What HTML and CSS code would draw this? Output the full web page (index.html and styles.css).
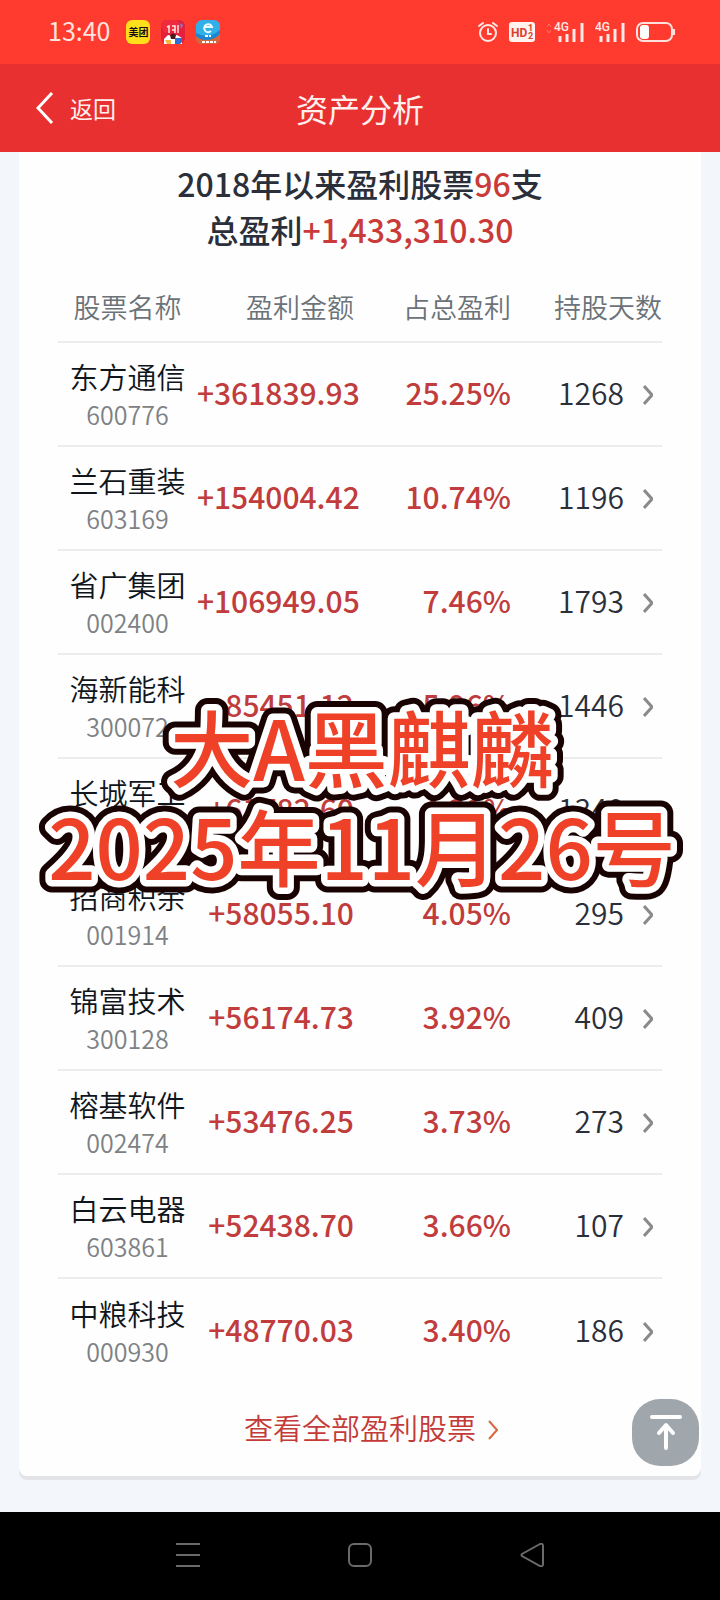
FILE: index.html
```html
<!DOCTYPE html>
<html lang="zh-CN">
<head>
    <meta charset="UTF-8">
    <meta name="viewport" content="width=device-width, initial-scale=1.0">
    <title>资产分析</title>
    <link rel="stylesheet" href="styles.css">
</head>
<body>

<div class="status_bar">
    <span class="time">13:40</span>
    <div class="apps">
        <span class="app_meituan">美团</span>
        <svg width="24" height="24" viewBox="0 0 24 24">
            <rect width="24" height="24" rx="6" fill="#e5203c"/>
            <path d="M0 6q0-6 6-6h10l4 7-16 6z" fill="#ef2b3d"/>
            <path d="M6 7l2-1v7M11 6h3v7M11 10h3M17 5v8" stroke="#ffe6e6" stroke-width="1.5" fill="none"/>
            <path d="M19 3l3 2-2 4z" fill="#7f7fd0"/>
            <path d="M3 24v-5l4-4 5 1 4-1 5 3v6z" fill="#fff"/>
            <path d="M9 15q3-3 6 0l-1 4h-4z" fill="#4a1c1c"/>
            <path d="M4 20h6v4H6z" fill="#f6b73c"/>
            <path d="M14 18h7v4l-2 2h-5z" fill="#2f6fd0"/>
        </svg>
        <svg width="24" height="24" viewBox="0 0 24 24">
            <rect width="24" height="24" rx="6" fill="#2fb0ea"/>
            <path d="M0 15q12 8 24-2v5q0 6-6 6H6q-6 0-6-6z" fill="#d9653b"/>
            <path d="M0 13q12 7 24-3v4q-6 6-14 6-6 0-10-4z" fill="#1c86cf"/>
            <path d="M9 7h7a4 4 0 1 0-1 4" stroke="#e9fbff" stroke-width="2" fill="none"/>
            <path d="M9 16h6M6 22h14" stroke="#fff" stroke-width="2" stroke-dasharray="3 1"/>
        </svg>
    </div>
    <div class="signals">
        <svg width="20" height="22" viewBox="0 0 20 22" fill="none" stroke="#ffe9e6" stroke-width="2" stroke-linecap="round">
            <circle cx="10" cy="12" r="8"/>
            <path d="M10 8v5h3M1 5l4-3M19 5l-4-3"/>
        </svg>
        <svg width="26" height="20" viewBox="0 0 26 20">
            <rect width="26" height="20" rx="3" fill="#fff2ef"/>
            <text x="2" y="15" class="hd">HD</text>
            <text x="19" y="9" class="hd_small">1</text>
            <text x="19" y="17" class="hd_small">2</text>
        </svg>
        <svg width="38" height="22" viewBox="0 0 38 22">
            <path d="M1 6l2-3 2 3M1 9l2 3 2-3" stroke="#ff7065" fill="none"/>
            <text x="8" y="10" class="net">4G</text>
            <path d="M14 15v6M21 13v8M28 8v13M36 2v19" stroke="#ffe9e6" stroke-width="3"/>
        </svg>
        <svg width="30" height="22" viewBox="0 0 30 22">
            <text x="0" y="10" class="net">4G</text>
            <path d="M6 15v6M13 13v8M20 8v13M28 2v19" stroke="#ffe9e6" stroke-width="3"/>
        </svg>
        <svg width="39" height="20" viewBox="0 0 39 20">
            <rect x="1" y="1" width="35" height="18" rx="6" fill="none" stroke="#ffe0dc" stroke-width="2"/>
            <rect x="4" y="3" width="9" height="14" rx="3" fill="#fff"/>
            <path d="M38 7v6" stroke="#ffe0dc" stroke-width="2"/>
        </svg>
    </div>
</div>

<header class="top_bar">
    <a href="#" class="back">
        <svg width="18" height="32" viewBox="0 0 18 32" fill="none" stroke="#fff" stroke-width="3">
            <path d="M16 1L2 16l14 15"/>
        </svg>
        返回
    </a>
    <h1>资产分析</h1>
</header>

<main class="main_container">
    <section class="card">
        <h2>2018年以来盈利股票<b>96</b>支<br>总盈利<b>+1,433,310.30</b></h2>

        <table class="stocks">
            <thead>
                <tr><th class="c_name">股票名称</th><th class="c_sum">盈利金额</th><th class="c_part">占总盈利</th><th class="c_days">持股天数</th></tr>
            </thead>
            <tbody>
                <tr><td>东方通信<small>600776</small></td><td>+361839.93</td><td>25.25%</td><td><a href="#">1268<svg class="arrow" viewBox="0 0 10 20"><path d="M1 1l8 9-8 9"/></svg></a></td></tr>
                <tr><td>兰石重装<small>603169</small></td><td>+154004.42</td><td>10.74%</td><td><a href="#">1196<svg class="arrow" viewBox="0 0 10 20"><path d="M1 1l8 9-8 9"/></svg></a></td></tr>
                <tr><td>省广集团<small>002400</small></td><td>+106949.05</td><td>7.46%</td><td><a href="#">1793<svg class="arrow" viewBox="0 0 10 20"><path d="M1 1l8 9-8 9"/></svg></a></td></tr>
                <tr><td>海新能科<small>300072</small></td><td>+85451.12</td><td>5.96%</td><td><a href="#">1446<svg class="arrow" viewBox="0 0 10 20"><path d="M1 1l8 9-8 9"/></svg></a></td></tr>
                <tr><td>长城军工<small>601606</small></td><td>+61782.60</td><td>4.31%</td><td><a href="#">1340<svg class="arrow" viewBox="0 0 10 20"><path d="M1 1l8 9-8 9"/></svg></a></td></tr>
                <tr><td>招商积余<small>001914</small></td><td>+58055.10</td><td>4.05%</td><td><a href="#">295<svg class="arrow" viewBox="0 0 10 20"><path d="M1 1l8 9-8 9"/></svg></a></td></tr>
                <tr><td>锦富技术<small>300128</small></td><td>+56174.73</td><td>3.92%</td><td><a href="#">409<svg class="arrow" viewBox="0 0 10 20"><path d="M1 1l8 9-8 9"/></svg></a></td></tr>
                <tr><td>榕基软件<small>002474</small></td><td>+53476.25</td><td>3.73%</td><td><a href="#">273<svg class="arrow" viewBox="0 0 10 20"><path d="M1 1l8 9-8 9"/></svg></a></td></tr>
                <tr><td>白云电器<small>603861</small></td><td>+52438.70</td><td>3.66%</td><td><a href="#">107<svg class="arrow" viewBox="0 0 10 20"><path d="M1 1l8 9-8 9"/></svg></a></td></tr>
                <tr><td>中粮科技<small>000930</small></td><td>+48770.03</td><td>3.40%</td><td><a href="#">186<svg class="arrow" viewBox="0 0 10 20"><path d="M1 1l8 9-8 9"/></svg></a></td></tr>
            </tbody>
        </table>

        <a href="#" class="more">查看全部盈利股票<svg class="arrow" viewBox="0 0 10 20"><path d="M1 1l8 9-8 9"/></svg></a>
    </section>
</main>

<!-- caption over the list: dark outline, white outline, red text -->
<svg class="caption" viewBox="0 0 720 260">
    <use href="#caption_text" class="outline_dark"/>
    <use href="#caption_text" class="outline_white"/>
    <g id="caption_text">
        <text x="362" y="121">大A黑麒麟</text>
        <text x="362" y="220">2025年11月26号</text>
    </g>
</svg>

<button class="to_top" type="button" aria-label="回到顶部">
    <svg width="32" height="36" viewBox="0 0 32 36" fill="none" stroke="#fff" stroke-width="4" stroke-linecap="round" stroke-linejoin="round">
        <path d="M2 2h28M16 33V11M9 18l7-8 7 8"/>
    </svg>
</button>

<nav class="nav_bar">
    <button type="button" aria-label="菜单">
        <svg width="24" height="24" viewBox="0 0 24 24"><path d="M0 1h24M0 12h24M0 23h24"/></svg>
    </button>
    <button type="button" aria-label="主屏幕">
        <svg width="24" height="24" viewBox="0 0 24 24"><rect x="1" y="1" width="22" height="22" rx="5"/></svg>
    </button>
    <button type="button" aria-label="返回">
        <svg width="24" height="24" viewBox="0 0 24 24"><path d="M20 1L2 11q-1 1 0 2l18 10q3 1 3-2V3q0-3-3-2z"/></svg>
    </button>
</nav>

</body>
</html>
```

FILE: styles.css
```css
* {
  box-sizing: border-box;
}

body {
  margin: 0;
  min-height: 100vh;
  display: flex;
  flex-direction: column;
  position: relative;
  background-color: #f3f7fb;
  font-family: "Noto Sans CJK SC", sans-serif;
  color: #2a2f3a;
}

a {
  color: inherit;
  text-decoration: none;
}

button {
  border: none;
  padding: 0;
  cursor: pointer;
}

.status_bar {
  height: 64px;
  padding: 0 45px 0 48px;
  display: flex;
  align-items: center;
  background-color: #ff3b2f;
  color: #ffe3df;
}

.time {
  font-size: 25px;
  line-height: 60px;
  padding-bottom: 4px;
}

.apps {
  display: flex;
  gap: 11px;
  margin-left: 16px;
}

.app_meituan {
  width: 24px;
  height: 24px;
  border-radius: 6px;
  background-color: #ffdf1b;
  color: #111;
  font-size: 10px;
  font-weight: 700;
  line-height: 24px;
  text-align: center;
}

.signals {
  display: flex;
  align-items: center;
  gap: 11px;
  margin-left: auto;
}

.hd,
.hd_small,
.net {
  font-family: Roboto, sans-serif;
  font-weight: 700;
}

.hd {
  font-size: 12px;
  fill: #d8402f;
}

.hd_small {
  font-size: 9px;
  fill: #d8402f;
}

.net {
  font-size: 12px;
  font-weight: 500;
  fill: #ffe9e6;
}

.top_bar {
  height: 88px;
  padding: 0 36px;
  display: grid;
  grid-template-columns: 1fr auto 1fr;
  align-items: center;
  background-color: #e83030;
  color: #fff0ee;
}

.back {
  display: flex;
  align-items: center;
  gap: 16px;
  font-size: 23px;
}

h1 {
  margin: 0;
  font-size: 32px;
  font-weight: 400;
}

.main_container {
  flex: 1;
  padding: 0 19px 36px;
}

.card {
  padding: 8px 39px 26px;
  background-color: #fefefe;
  border-radius: 0 0 8px 8px;
  box-shadow: 0 4px 0 #e2e4e8;
}

h2 {
  margin: 0;
  font-size: 32px;
  font-weight: 500;
  line-height: 46px;
  text-align: center;
}

h2 b {
  font-weight: 500;
  color: #c93a38;
}

.stocks {
  width: 100%;
  margin-top: 24px;
  border-collapse: separate;
  border-spacing: 0;
  table-layout: fixed;
}

th {
  height: 67px;
  padding: 0 0 4px;
  border-bottom: 2px solid #ececee;
  font-size: 27px;
  font-weight: 350;
  color: #6b7278;
  text-align: right;
  white-space: nowrap;
}

.c_name {
  width: 23%;
  text-align: center;
}

.c_sum,
.c_part {
  width: 26%;
}

td {
  height: 104px;
  padding: 0 0 4px;
  border-bottom: 2px solid #ececee;
  font-size: 30px;
  font-weight: 500;
  color: #c13c3c;
  text-align: right;
  white-space: nowrap;
}

tr:last-child td {
  border-bottom: none;
}

td:first-child {
  padding: 2px 0 0;
  font-size: 29px;
  font-weight: 350;
  line-height: 38px;
  color: #10151c;
  text-align: center;
}

td small {
  display: block;
  font-size: 25px;
  color: #7d8184;
}

td:last-child {
  font-weight: 350;
  color: #2a2f3a;
}

td a {
  display: flex;
  align-items: center;
  justify-content: flex-end;
  gap: 19px;
  padding-right: 9px;
}

.arrow {
  width: 10px;
  height: 20px;
  margin-top: 6px;
  fill: none;
  stroke: #8a8a8a;
  stroke-width: 3;
}

.more {
  display: flex;
  align-items: center;
  justify-content: center;
  gap: 12px;
  margin-top: 21px;
  padding-left: 22px;
  font-size: 29px;
  font-weight: 350;
  line-height: 46px;
  color: #c33a38;
}

.more .arrow {
  stroke: #d8683f;
  stroke-width: 2;
}

.caption {
  position: absolute;
  top: 660px;
  left: 0;
  width: 100%;
  pointer-events: none;
}

.caption text {
  font-size: 83px;
  font-weight: 500;
  text-anchor: middle;
}

#caption_text {
  fill: #ee4127;
}

.outline_dark,
.outline_white {
  stroke-linejoin: round;
}

.outline_dark {
  stroke: #180202;
  stroke-width: 25px;
}

.outline_white {
  stroke: #fff;
  stroke-width: 13px;
}

.to_top {
  position: absolute;
  right: 21px;
  bottom: 134px;
  width: 67px;
  height: 67px;
  display: flex;
  align-items: center;
  justify-content: center;
  border-radius: 28px;
  background-color: #a0a7ac;
}

.nav_bar {
  height: 88px;
  padding: 0 102px;
  display: flex;
  background-color: #000;
}

.nav_bar button {
  flex: 1;
  background: none;
}

.nav_bar svg {
  fill: none;
  stroke: #6a6a6a;
  stroke-width: 2;
}
```
